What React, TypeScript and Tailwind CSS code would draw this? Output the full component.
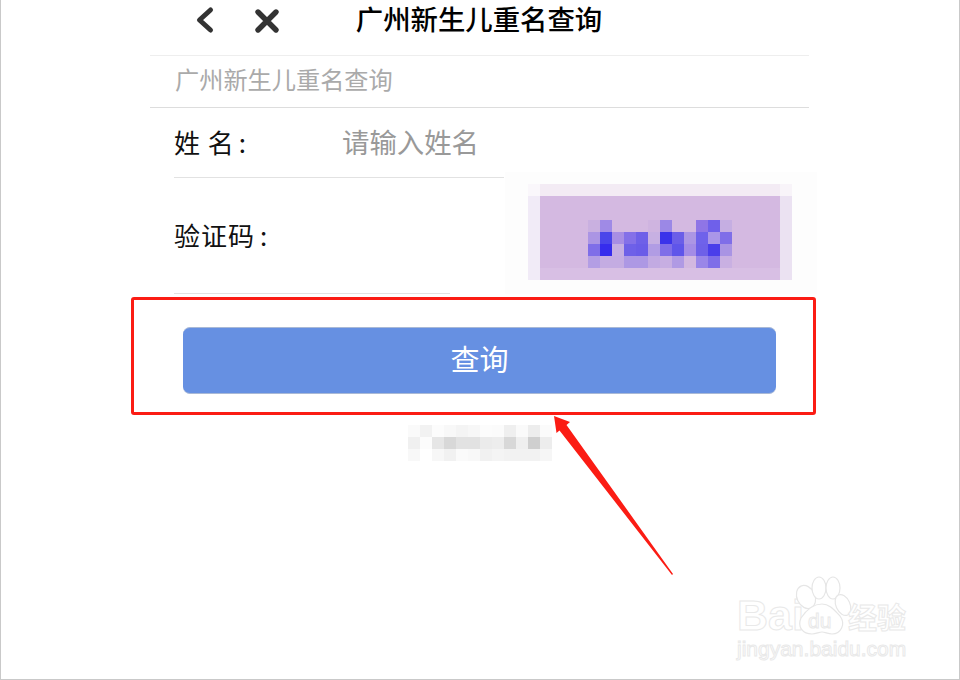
import React from 'react';

const B = '#d4b9e1';

// pixelated captcha, 22 x 8 cells of 12px
const captchaRows: string[][] = [
  ['#c9b0e0', '#9f8ae6', B, B, B, '#cfb4e0', '#9b88e6', B, B, '#8f75e6', '#6f60ea', '#c5aee2'],
  ['#ab95e4', '#4a45ea', '#a88ee4', '#8470e8', '#6e60e8', '#c7b0e2', '#3a33ea', '#6b5ee8', '#ac96e4', '#6f62ea', '#aa96e8', '#7f6ee8'],
  ['#7f6ee8', '#362ced', '#c5aee2', '#6e60e8', '#6a5ce8', '#b19ce4', '#7f6ee8', '#5f55ea', '#a48ce6', '#6e60e8', '#4a3eea', '#a994e4'],
  ['#b39ee4', '#c4ace2', '#c4ace2', '#ad98e4', '#ad98e4', '#c2aae2', '#c7aee2', '#b09ae4', '#d3b8e0', '#9a86e8', '#7f6ee8', '#c9b0e2'],
];

// pixelated line of small text under the button
const blurRows: string[][] = [
  ['#fafafa', '#f2f2f2', '#fcfcfc', '#f8f8f8', '#f4f4f4', '#f7f7f7', '#fcfcfc', '#fbfbfb', '#efefef', '#fafafa', '#ededed', '#fbfbfb'],
  ['#f0f0f0', '#fcfcfc', '#e6e6e6', '#d8d8d8', '#e2e2e2', '#e2e2e2', '#ebebeb', '#ededed', '#d8d8d8', '#efefef', '#cfcfcf', '#ededed'],
  ['#f8f8f8', '#ffffff', '#f7f7f7', '#f1f1f1', '#fafafa', '#f8f8f8', '#f1f1f1', '#f4f4f4', '#f2f2f2', '#f2f2f2', '#f2f2f2', '#f6f6f6'],
];

const Captcha = () => (
  <svg width="264" height="96" viewBox="0 0 264 96" shapeRendering="crispEdges" className="block">
    <rect x="0" y="0" width="12" height="12" fill="#faf7fb" />
    <rect x="12" y="0" width="240" height="12" fill="#f3ebf4" />
    <rect x="252" y="0" width="12" height="12" fill="#f8f4f9" />
    <rect x="0" y="12" width="12" height="84" fill="#f1ebf7" />
    <rect x="252" y="12" width="12" height="84" fill="#ebe2f2" />
    <rect x="12" y="12" width="240" height="72" fill={B} />
    <rect x="12" y="84" width="240" height="12" fill="#d8bfe4" />
    {captchaRows.map((row, r) =>
      row.map((c, i) => <rect key={`${r}-${i}`} x={60 + i * 12} y={36 + r * 12} width="12" height="12" fill={c} />)
    )}
  </svg>
);

const BlurLine = () => (
  <svg width="144" height="36" viewBox="0 0 144 36" shapeRendering="crispEdges" className="block">
    {blurRows.map((row, r) =>
      row.map((c, i) => <rect key={`${r}-${i}`} x={i * 12} y={r * 12} width="12" height="12" fill={c} />)
    )}
  </svg>
);

const Watermark = () => (
  <div className="absolute left-[736px] top-[576px] w-[176px] h-[86px] text-white [-webkit-text-stroke:1px_#e9e9e9]">
    <span className="absolute left-0 top-[16px] text-[43px] leading-[46px] font-bold font-['Liberation_Sans',sans-serif]">Bai</span>
    <svg className="absolute left-[58px] top-0" width="58" height="62" viewBox="0 0 58 62" fill="#fff" stroke="#e6e6e6" strokeWidth="1.2">
      <ellipse cx="11" cy="21" rx="9" ry="12" transform="rotate(-25 11 21)" />
      <ellipse cx="24" cy="12" rx="7" ry="11" />
      <ellipse cx="38" cy="12" rx="7" ry="11" />
      <ellipse cx="48" cy="29" rx="7" ry="11" transform="rotate(-25 48 29)" />
      <path d="M27 28c8 0 13 7 18 12 6 8 1 18-8 18-4 0-7-2-10-2s-6 2-10 2C8 58 2 51 6 42c4-6 11-14 21-14z" />
    </svg>
    <span className="absolute left-[71px] top-[33px] text-[21px] leading-[24px] font-['Liberation_Sans',sans-serif]">du</span>
    <span className="absolute left-[111px] top-[22px] text-[29px] leading-[36px] font-bold whitespace-nowrap font-['Noto_Sans_CJK_SC',sans-serif]">经验</span>
    <span className="absolute left-0 top-[60px] text-[21px] leading-[26px] whitespace-nowrap font-['Liberation_Sans',sans-serif]">jingyan.baidu.com</span>
  </div>
);

const App: React.FC = () => {
  return (
    <div className="relative w-[960px] h-[680px] overflow-hidden bg-white border-x border-b border-[#c9c9c9] font-['Noto_Sans_CJK_SC',sans-serif]">
      {/* faint halo left by the captcha crop */}
      <div className="absolute left-[504px] top-[172px] w-[312px] h-[122px] bg-[#fdfdfd]" />

      <div className="w-[659px] ml-[149px] flex flex-col">
        {/* nav bar */}
        <header className="relative h-[56px] border-b border-[#eeeeee] flex items-center justify-center pb-[20px]">
          <svg className="absolute left-[43px] top-[4px]" width="24" height="32" viewBox="0 0 24 32" fill="none" stroke="#333333" strokeWidth="5" strokeLinecap="round" strokeLinejoin="round">
            <path d="M17.5 6 6.5 16l11 10" />
          </svg>
          <svg className="absolute left-[103px] top-[6px]" width="28" height="30" viewBox="0 0 28 30" fill="none" stroke="#333333" strokeWidth="5.4" strokeLinecap="round">
            <path d="M5 6l18 18M23 6 5 24" />
          </svg>
          <h1 className="text-[27.4px] leading-[30px] font-medium text-black ml-[-1px]">广州新生儿重名查询</h1>
        </header>

        <div className="h-[52px] border-b border-[#dddddd] pl-[25px] pb-[4px] flex items-center text-[24.2px] text-[#aaaaaa]">
          广州新生儿重名查询
        </div>

        {/* name */}
        <div className="ml-[24px] w-[330px] h-[70px] border-b border-[#e2e2e2] flex items-center pb-[2px]">
          <span className="w-[168px] text-[26px] tracking-[1px] text-[#111111] whitespace-nowrap">姓 名<span className="ml-[4px]">:</span></span>
          <span className="text-[27.4px] text-[#999999] whitespace-nowrap">请输入姓名</span>
        </div>

        {/* captcha */}
        <div className="relative ml-[24px] h-[117px] flex">
          <div className="w-[276px] h-[116px] border-b border-[#e2e2e2] flex items-center pb-[2px]">
            <span className="text-[26px] tracking-[1px] text-[#111111] whitespace-nowrap">验证码<span className="ml-[5px]">:</span></span>
          </div>
          <div className="ml-[78px] mt-[6px]">
            <Captcha />
          </div>
        </div>

        {/* submit */}
        <button className="relative mt-[32px] ml-[33px] w-[593px] h-[67px] pb-[4px] rounded-[7px] bg-[#6690e2] border-y border-[#a9b9d6] text-white text-[29px] flex items-center justify-center">
          查询
        </button>

        <div className="mt-[31px] ml-[258px]">
          <BlurLine />
        </div>
      </div>

      {/* annotation */}
      <div className="absolute left-[130px] top-[297px] w-[685px] h-[118px] border-[3px] border-[#fb1c14] rounded-[3px]" />
      <svg className="absolute left-[-1px] top-0" width="960" height="680" viewBox="0 0 960 680" fill="#fb1c14">
        <path d="M554 416 570 422 566.5 425 673 574 672 575 559.5 430.5 556.5 433z" />
      </svg>

      <Watermark />
    </div>
  );
};

export default App;
